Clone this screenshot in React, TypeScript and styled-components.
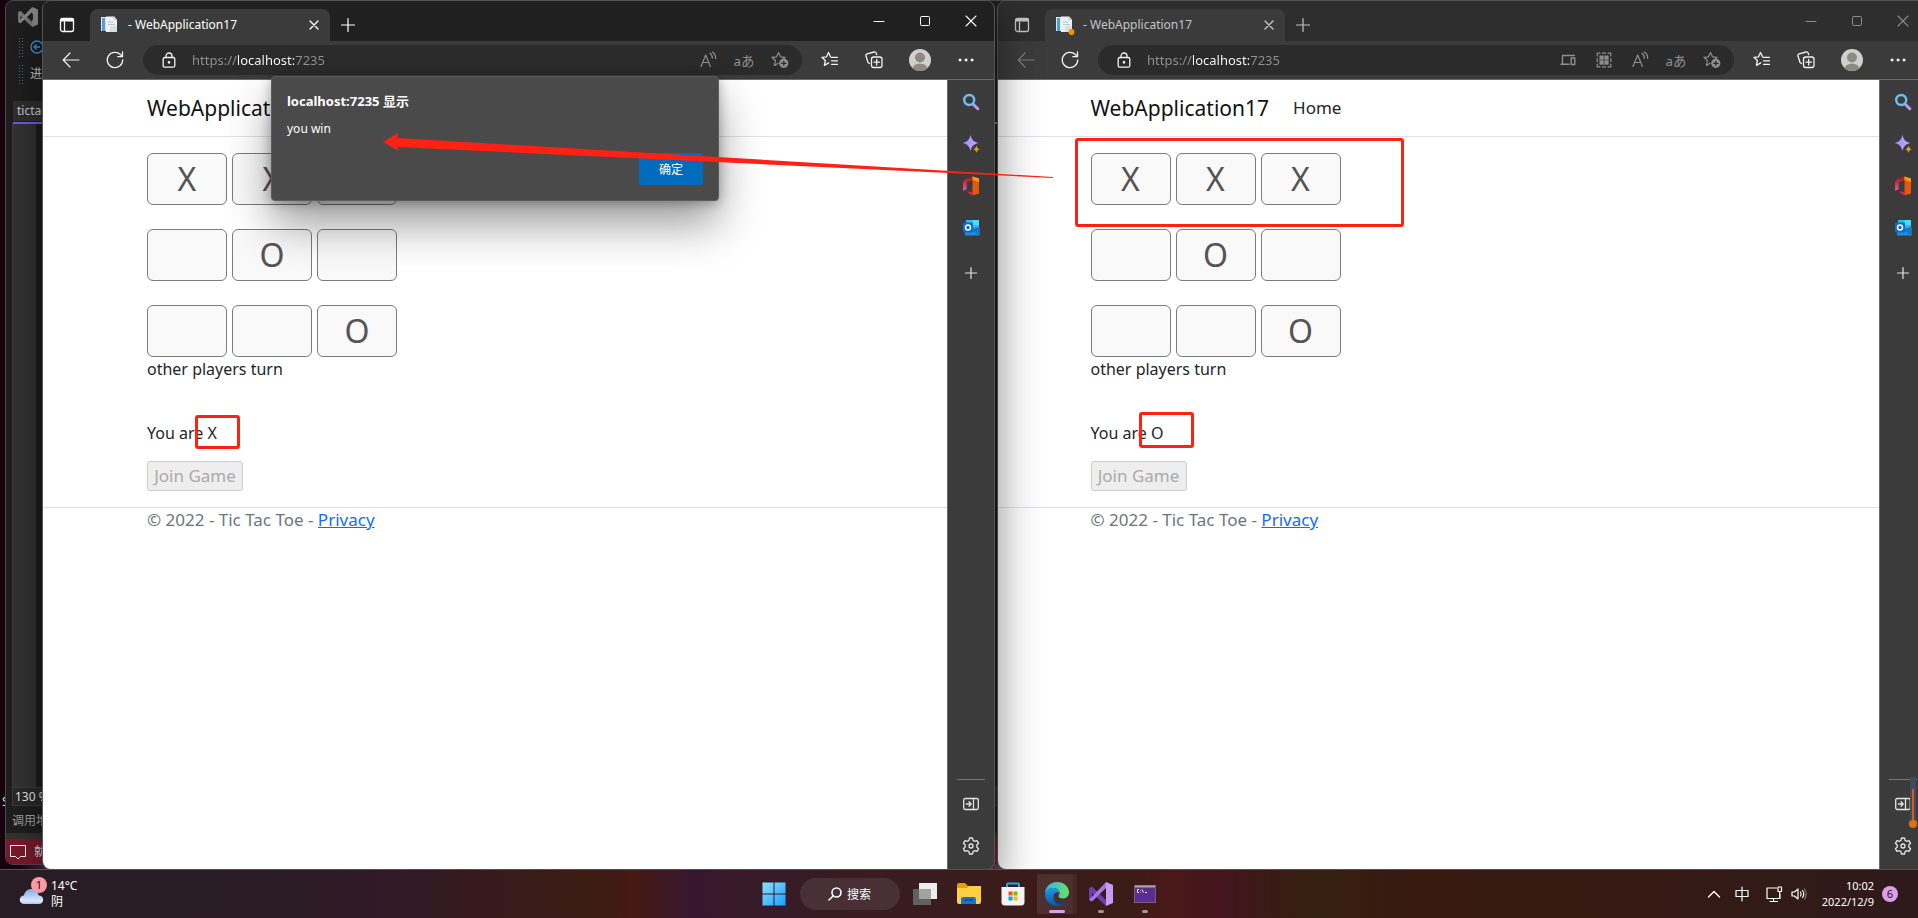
import React from 'react';
import styled, { createGlobalStyle } from 'styled-components';

const GlobalStyle = createGlobalStyle`
  *, *::before, *::after { box-sizing: border-box; }
  html, body, #root { height: 100%; }
  body {
    margin: 0;
    overflow: hidden;
    background: #180210;
    font-family: 'Noto Sans', 'Noto Sans CJK SC', sans-serif;
    font-size: 12px;
    line-height: 16px;
  }
  button, input { font-family: inherit; }
  svg { display: block; flex: none; }
`;

/* ---------- shell ---------- */

const Desktop = styled.div`
  height: 100%;
  display: flex;
  flex-direction: column;
`;

const Workspace = styled.main`
  position: relative;
  flex: 1;
  min-height: 0;
  overflow: hidden;
  padding-top: 1px;
  display: grid;
  grid-template-columns: 43px minmax(0, 951fr) 4px minmax(0, 920fr);
  background: linear-gradient(to right, #180210 0 20px, #6b3a52 60px);
`;

const IconButton = styled.button<{ $w?: number; $h?: number }>`
  width: ${(p) => p.$w ?? 44}px;
  height: ${(p) => p.$h ?? 30}px;
  flex: none;
  padding: 0;
  border: 0;
  background: none;
  color: inherit;
  display: flex;
  align-items: center;
  justify-content: center;
`;

/* ---------- editor behind the browsers ---------- */

const DesktopLabel = styled.span`
  position: absolute;
  left: 2px;
  top: 794px;
  color: #ddd;
`;

const Editor = styled.section`
  position: absolute;
  left: 5px;
  right: 0;
  top: 0;
  bottom: 4px;
  display: flex;
  flex-direction: column;
  border: 1px solid #4a4a4a;
  border-radius: 8px;
  overflow: hidden;
  background: #1f1f1f;
  color: #d0d0d0;
`;

const EditorTitle = styled.div`
  height: 32px;
  padding: 6px 12px;
`;

const EditorBar = styled.div`
  height: 27px;
  display: flex;
  align-items: center;
  gap: 6px;
  padding-left: 12px;
  white-space: nowrap;
`;

const Grip = styled.span`
  width: 6px;
  height: 20px;
  flex: none;
  background: radial-gradient(circle, #6a6a6a 1px, transparent 1px) 0 0 / 3px 3px;
`;

const EditorTabs = styled.div`
  margin: 14px 0 0 7px;
  height: 23px;
  border-bottom: 2px solid #7160e8;
`;

const EditorTab = styled.span`
  display: block;
  width: 90px;
  height: 20px;
  padding: 2px 4px;
  background: #303030;
`;

const EditorBody = styled.div`
  flex: 1;
  margin-left: 6px;
  border-left: 1px solid #3d3d3d;
  background: linear-gradient(to right, #333 0 23px, #1c1c1c 23px);
`;

const EditorZoom = styled.div`
  margin-left: 6px;
  height: 19px;
  padding: 1px 2px;
  border: 1px solid #3d3d3d;
  background: #2a2a2a;
  color: #eee;
`;

const EditorPanel = styled.div`
  height: 33px;
  padding: 7px 6px;
  color: #a8a8a8;
  border-bottom: 6px solid #333;
`;

const EditorStatus = styled.div`
  height: 25px;
  display: flex;
  align-items: center;
  gap: 7px;
  padding-left: 3px;
  background: #7d1a2d;
  color: #eee;
`;

/* ---------- browser window ---------- */

const Window = styled.section<{ $active: boolean }>`
  position: relative;
  grid-column: ${(p) => (p.$active ? 2 : 4)};
  grid-row: 1;
  z-index: ${(p) => (p.$active ? 2 : 1)};
  margin-right: ${(p) => (p.$active ? 0 : -8)}px;
  display: flex;
  flex-direction: column;
  border-radius: 8px;
  background: #3b3b3b;
  box-shadow: 0 0 0 1px #555${(p) => (p.$active ? ', 0 16px 44px 4px rgba(0, 0, 0, .45)' : '')};
`;

const TitleBar = styled.header<{ $active: boolean }>`
  height: 40px;
  display: flex;
  align-items: flex-end;
  border-radius: 8px 8px 0 0;
  background: ${(p) => (p.$active ? '#202020' : '#2e2e2e')};
  color: ${(p) => (p.$active ? '#fff' : '#c4c4c4')};
`;

const Tab = styled.div`
  width: 240px;
  height: 32px;
  display: flex;
  align-items: center;
  padding: 0 8px 0 10px;
  border-radius: 8px 8px 0 0;
  background: #3b3b3b;
`;

const TabTitle = styled.span`
  flex: 1;
  padding-left: 8px;
`;

const WindowButtons = styled.div<{ $active: boolean }>`
  margin-left: auto;
  align-self: flex-start;
  display: flex;
  color: ${(p) => (p.$active ? '#fff' : '#8c8c8c')};
`;

const ToolBar = styled.div`
  height: 39px;
  display: flex;
  align-items: center;
  padding: 0 6px;
  border-bottom: 1px solid #6a6a6a;
  color: #f2f2f2;
`;

const Dim = styled.span<{ $on: boolean }>`
  display: flex;
  color: ${(p) => (p.$on ? '#7d7d7d' : '#f2f2f2')};
`;

const AddressBar = styled.div`
  flex: 1;
  min-width: 0;
  height: 30px;
  margin: 0 6px;
  padding: 0 4px;
  display: flex;
  align-items: center;
  border-radius: 15px;
  background: #2b2b2b;
  color: #8f8f8f;
`;

const AddressInput = styled.input`
  flex: 1;
  min-width: 0;
  height: 20px;
  margin-left: 1px;
  padding: 0;
  border: 0;
  outline: 0;
  font-size: 13px;
  line-height: 20px;
  background: linear-gradient(to right, #919191 0 46px, #fff 46px 102px, #919191 102px);
  background-clip: text;
  -webkit-background-clip: text;
  color: transparent;
`;

const Avatar = styled.span`
  width: 22px;
  height: 22px;
  overflow: hidden;
  border-radius: 50%;
  background: #d2d0ce;
`;

const WindowBody = styled.div`
  flex: 1;
  min-height: 0;
  display: flex;
`;

const Sidebar = styled.aside`
  width: 47px;
  flex: none;
  display: flex;
  flex-direction: column;
  align-items: center;
  padding: 1px 0 2px;
  border-left: 1px solid #6a6a6a;
  color: #e4e4e4;
`;

const SidebarRule = styled.hr`
  width: 28px;
  margin: auto 0 3px;
  border: 0;
  border-top: 1px solid #777;
`;

/* ---------- web page ---------- */

const Page = styled.article<{ $active: boolean }>`
  position: relative;
  flex: 1;
  min-width: 0;
  background: #fff;
  color: #212529;
  font-size: 16px;
  line-height: 24px;
  border-bottom-left-radius: 8px;
`;

const Container = styled.div`
  max-width: 720px;
  margin: 0 auto;
  padding: 0 12px;
`;

const NavBar = styled.nav`
  height: 57px;
  margin-bottom: 16px;
  border-bottom: 1px solid #dee2e6;
`;

const NavInner = styled(Container)`
  height: 56px;
  display: flex;
  align-items: center;
  gap: 24px;
`;

const NavLink = styled.a<{ $brand?: boolean }>`
  color: ${(p) => (p.$brand ? '#111' : '#212529')};
  font-size: ${(p) => (p.$brand ? 21 : 17)}px;
  text-decoration: none;
`;

const Board = styled.div`
  display: flex;
  flex-direction: column;
  gap: 24px;
`;

const BoardRow = styled.div`
  position: relative;
  display: flex;
  gap: 5px;
`;

const Cell = styled.button`
  width: 80px;
  height: 52px;
  padding: 0;
  border: 1px solid #7c7c7c;
  border-radius: 6px;
  background: #f9f9f9;
  color: #545454;
  font-size: 32px;
  line-height: 48px;
`;

const Status = styled.p`
  margin: 0 0 40px;
`;

const Role = styled.p`
  position: relative;
  margin: 0 0 16px;
`;

const JoinButton = styled.button`
  display: block;
  width: 96px;
  height: 30px;
  margin-bottom: 16px;
  padding: 0;
  border: 1px solid #ccc;
  border-radius: 3px;
  background: #eee;
  color: #aaa;
  font-size: 17px;
  line-height: 24px;
  white-space: nowrap;
`;

const Footer = styled.footer`
  border-top: 1px solid #dee2e6;
  color: #6c757d;
  font-size: 17px;

  a { color: #0d6efd; }
`;

const Mark = styled.span<{ $x: number; $y: number; $w: number; $h: number }>`
  position: absolute;
  left: ${(p) => p.$x}px;
  top: ${(p) => p.$y}px;
  width: ${(p) => p.$w}px;
  height: ${(p) => p.$h}px;
  border: 3px solid #ff2113;
  border-radius: 3px;
`;

const Arrow = styled.svg`
  position: absolute;
  left: 383px;
  top: 132px;
  z-index: 4;
`;

const Dialog = styled.section`
  position: absolute;
  z-index: 3;
  top: -4px;
  left: 50%;
  width: 448px;
  height: 125px;
  margin-left: -224px;
  padding: 16px 15px 15px;
  display: flex;
  flex-direction: column;
  border: 1px solid #5c5c5c;
  border-radius: 4px;
  background: #4a4a4a;
  color: #fff;
  font-size: 12px;
  line-height: 16px;
  box-shadow: 0 24px 44px rgba(0, 0, 0, .38), 0 2px 12px rgba(0, 0, 0, .3);
`;

const DialogTitle = styled.h2`
  margin: 0 0 12px;
  font-size: 13px;
  line-height: 16px;
`;

const DialogText = styled.p`
  margin: 0;
`;

const DialogButton = styled.button`
  width: 64px;
  height: 32px;
  margin-top: auto;
  align-self: flex-end;
  flex: none;
  padding: 0;
  border: 0;
  border-radius: 2px;
  background: #006cbe;
  color: #fff;
  font-size: 12px;
`;

/* ---------- taskbar ---------- */

const TaskBar = styled.footer`
  height: 49px;
  flex: none;
  display: grid;
  grid-template-columns: 1fr auto 1fr;
  align-items: stretch;
  border-top: 1px solid #5b4c50;
  color: #fff;
  background: linear-gradient(
    to right,
    #281d25 0%, #291c25 14%, #321a28 20%, #361a1d 25%, #3c1c12 31%, #451a13 33%,
    #38162f 36%, #361a28 39%, #381c20 46%, #3c1b16 59%, #4a1818 61%, #43151c 64%,
    #361d12 67%, #36200f 69%, #371910 74%, #351a13 86%, #2e1a1b 100%
  );
`;

const Weather = styled.button`
  justify-self: start;
  display: flex;
  align-items: center;
  gap: 4px;
  padding: 0 16px 0 19px;
  border: 0;
  background: none;
  color: #fff;
  font-size: 12px;
  line-height: 16px;
  text-align: left;
`;

const WeatherIcon = styled.span`
  position: relative;
  width: 28px;
  height: 34px;
  padding-top: 10px;
`;

const Badge = styled.span<{ $color: string; $corner?: boolean }>`
  position: ${(p) => (p.$corner ? 'absolute' : 'static')};
  top: 0;
  right: 0;
  width: 16px;
  height: 16px;
  border-radius: 50%;
  background: ${(p) => p.$color};
  color: #111;
  font-size: 11px;
  line-height: 16px;
  text-align: center;
`;

const TaskApps = styled.div`
  display: flex;
  align-items: center;
`;

const TaskButton = styled.button<{ $open?: boolean }>`
  width: 44px;
  height: 48px;
  padding: 0;
  border: 0;
  background: none;
  display: flex;
  flex-direction: column;
  align-items: center;
  padding-top: 12px;
  gap: 4px;
  ${(p) =>
    p.$open &&
    `background:
      linear-gradient(rgba(255,255,255,.09), rgba(255,255,255,.09)) 2px 4px / 36px 40px no-repeat,
      linear-gradient(rgba(255,255,255,.05), rgba(255,255,255,.05)) 38px 4px / 4px 40px no-repeat;`}
`;

const RunMark = styled.span<{ $active?: boolean }>`
  width: ${(p) => (p.$active ? 16 : 6)}px;
  height: 3px;
  border-radius: 2px;
  background: ${(p) => (p.$active ? '#dd9de8' : '#a09898')};
`;

const SearchButton = styled.button`
  width: 100px;
  height: 32px;
  margin: 0 3px 0 4px;
  padding: 0;
  display: flex;
  align-items: center;
  justify-content: center;
  gap: 5px;
  border: 0;
  border-radius: 16px;
  background: rgba(255, 255, 255, .09);
  color: #fff;
  font-size: 12px;
`;

const Tray = styled.div`
  justify-self: end;
  display: flex;
  align-items: center;
  padding-right: 20px;
`;

const Clock = styled.div`
  margin: 0 8px 0 15px;
  font-size: 11px;
  text-align: right;
`;

const Thermometer = styled.svg`
  position: absolute;
  right: 0;
  top: 775px;
  z-index: 5;
`;

/* ---------- icons ---------- */

type GlyphProps = { size?: number; w?: number; children: React.ReactNode };

const Glyph = ({ size = 16, w = 1, children }: GlyphProps) => (
  <svg width={size} height={size} viewBox={`0 0 ${size} ${size}`} fill="none" stroke="currentColor"
    strokeWidth={w} strokeLinecap="round" strokeLinejoin="round" aria-hidden="true">
    {children}
  </svg>
);

const TabsIcon = () => (
  <Glyph w={1.3}>
    <rect x="1.5" y="1.5" width="13" height="13" rx="2" />
    <path d="M2 3.5h12M2 2.6h12" strokeWidth="2" />
    <path d="M5.5 5v9" />
  </Glyph>
);
const CloseIcon = ({ big }: { big?: boolean }) => (
  <Glyph size={12} w={big ? 1.1 : 1.4}>{big ? <path d="M1 1l10 10M11 1L1 11" /> : <path d="M2 2l8 8M10 2l-8 8" />}</Glyph>
);
const PlusIcon = ({ size = 16 }: { size?: number }) => (
  <Glyph size={size} w={1.2}><path d={`M${size / 2} 1.500v${size - 3}M1.500 ${size / 2}h${size - 3}`} /></Glyph>
);
const BackIcon = () => <Glyph size={18} w={1.2}><path d="M17 9H1.500M8 2L1.200 9 8 16" /></Glyph>;
const ReloadIcon = () => (
  <Glyph size={18} w={1.3}><path d="M16.700 9a7.700 7.700 0 1 1-2.300-5.500l2 2M16.500 1v4.700h-4.700" /></Glyph>
);
const LockIcon = () => (
  <Glyph w={1.3}>
    <rect x="2.200" y="5.500" width="11.600" height="9.700" rx="1.500" />
    <path d="M5 5.500V4a3 3 0 0 1 6 0v1.500" />
    <circle cx="8" cy="10.300" r=".7" fill="currentColor" />
  </Glyph>
);
const STAR = 'M7.500 1.500l2 4.300 4.600.5-3.400 3.200M7.500 1.500l-2 4.300-4.600.5 3.500 3.200-1 4.900 3.700-2.200';
const AddFavIcon = () => (
  <Glyph size={18} w={1.2}>
    <path d={STAR} />
    <circle cx="12.800" cy="12.300" r="4" fill="currentColor" />
    <path d="M12.800 10.100v4.400M10.600 12.300h4.400" stroke="#2b2b2b" />
  </Glyph>
);
const FavoritesIcon = () => (
  <Glyph size={18} w={1.3}><path d="M9.500 5.800L7.500 1.500l-2 4.300-4.600.5 3.500 3.200-1 4.900 4.300-2.500M10.500 6.300h6M10.500 9.800h6M10.500 13.300h6" /></Glyph>
);
const CollectionsIcon = () => (
  <Glyph size={18} w={1.3}>
    <rect x="6.500" y="6" width="10.500" height="10.500" rx="2.200" />
    <path d="M11.700 8.500v5.500M9 11.200h5.500M4.500 12.500L3 11.500 1 5c-.3-1 .2-1.800 1.100-2.100L9 1c1-.3 1.900.2 2.200 1.100l.5 1.600" />
  </Glyph>
);
const ReadIcon = () => (
  <Glyph size={18} w={1.2}><path d="M2 15.500L6.700 4l4.700 11.500M3.700 11.500h6M11 2.200c1.600 1 2.400 2.800 2.300 5M13.400 1c2.300 1.400 3.300 3.600 3.200 6.500" /></Glyph>
);
const DevicesIcon = () => (
  <Glyph w={1.4}><path d="M2.500 11V3.500h12M1 12.300h8M14.500 6h-3.300v6.500h3.600V6z" /></Glyph>
);
const QrIcon = () => (
  <Glyph w={1.2}>
    <path d="M1.200 4V1.200H4M6.500 1.200h3M12 1.200h2.800V4M1.200 6.500v3M14.800 6.500v3M1.200 12v2.800H4M6.500 14.800h3M12 14.800h2.800V12" />
    <path d="M3.700 3.700h3.800v3.800H3.700zM8.600 3.700h3.800v3.800H8.600zM3.700 8.600h3.800v3.800H3.700zM8.600 8.600h3.800v3.800H8.600z" fill="currentColor" strokeWidth=".4" />
  </Glyph>
);
const DotsIcon = () => (
  <Glyph w={0.5}>{[2, 8, 14].map((x) => <circle key={x} cx={x} cy="8" r="1.200" fill="currentColor" />)}</Glyph>
);
const Favicon = ({ alert }: { alert: boolean }) => (
  <svg width="20" height="20" viewBox="0 0 20 20" aria-hidden="true">
    <path d="M1 2h10v14H1z" fill="#dfe8ee" />
    <path d="M2 3h3v13H2z" fill="#4f9fd4" />
    <path d="M6 1.500h8l3 3V17H6z" fill="#eef1f3" />
    <path d="M14 1.500v3h3M8 7h5M8 9.500h7" stroke="#b9c4cb" fill="none" />
    <path d="M10 11h7v6h-7z" fill="#d8dfe3" />
    {alert && <circle cx="16.500" cy="17" r="3" fill="#ff8c00" />}
  </svg>
);
const SearchColor = () => (
  <svg width="18" height="18" viewBox="0 0 18 18" fill="none" strokeWidth="2.400" aria-hidden="true">
    <path d="M11.500 11.500l4.300 4.300" stroke="#c295f2" strokeWidth="3" strokeLinecap="round" />
    <circle cx="7.200" cy="7" r="5" stroke="#6fc0ee" />
  </svg>
);
const Sparkle = () => (
  <svg width="18" height="18" viewBox="0 0 18 18" aria-hidden="true">
    <defs><linearGradient id="sp"><stop stopColor="#7f9cff" /><stop offset="1" stopColor="#e595ff" /></linearGradient></defs>
    <path d="M8.500 0C10 5 11 6.500 16.500 8c-5.500 1.500-6.500 3-8 8-1.500-5-2.500-6.500-8-8 5.500-1.500 6.500-3 8-8z" fill="url(#sp)" />
    <path d="M14.500 10.500c.7 2.300 1.200 3 3.300 3.700-2.100.7-2.600 1.300-3.300 3.600-.7-2.300-1.200-2.900-3.300-3.600 2.100-.7 2.600-1.400 3.300-3.700z" fill="#d9a514" />
  </svg>
);
const OfficeIcon = () => (
  <svg width="18" height="20" viewBox="0 0 18 20" aria-hidden="true">
    <defs><linearGradient id="of" x1="0" y1="0" x2="0" y2="1"><stop stopColor="#b11116" /><stop offset="1" stopColor="#e75a9e" /></linearGradient></defs>
    <path d="M10.500.500L3 3.300 1 5.800v9l3.700-1.600V5.900l6-1.700z" fill="url(#of)" />
    <path d="M10.500.500L17 2.500v15l-6.500 2z" fill="#e8560a" />
    <path d="M10.500.500L17 2.500V6l-6.500-2z" fill="#ff9a0a" />
    <path d="M4 15.200l6.500.8v3.500z" fill="#e3253f" />
  </svg>
);
const OutlookIcon = () => (
  <svg width="18" height="18" viewBox="0 0 18 18" aria-hidden="true">
    <path d="M4 1h13v8H4z" fill="#35b8f1" />
    <path d="M10.500 1H17v5h-6.500z" fill="#50d9ff" />
    <path d="M3 9l14.500-1v8.500H3z" fill="#1d8fdc" />
    <path d="M17.500 8v8.500L9 11z" fill="#1577c8" />
    <rect x="1" y="3.500" width="10" height="10" rx="1" fill="#0a6cc4" />
    <circle cx="6" cy="8.500" r="2.500" fill="none" stroke="#fff" strokeWidth="1.500" />
  </svg>
);
const PanelIcon = () => (
  <Glyph w={1.3}><rect x=".700" y="2.500" width="14.600" height="11" rx="1.500" /><path d="M10.500 2.500v11M3.300 8h4.700M6 5.800L8.200 8 6 10.200" /></Glyph>
);
const GearIcon = () => (
  <Glyph size={18} w={1.3}>
    <circle cx="9" cy="9" r="2" />
    <path d="M7.500 1h3l.6 2.400 1.500.9 2.400-.7 1.600 2.700-1.800 1.700v2l1.800 1.700-1.600 2.700-2.400-.7-1.500.9-.6 2.400h-3l-.6-2.400-1.500-.9-2.400.7-1.600-2.700L3.200 10V8L1.400 6.300 3 3.600l2.400.7 1.500-.9z" />
  </Glyph>
);

const StartIcon = () => (
  <svg width="24" height="24" viewBox="0 0 24 24" aria-hidden="true">
    <defs><linearGradient id="st" x1="0" y1="0" x2="1" y2="1"><stop stopColor="#8be0ff" /><stop offset="1" stopColor="#1a9fff" /></linearGradient></defs>
    <path d="M.500.500h11v11H.500zM12.500.500h11v11h-11zM.500 12.500h11v11H.500zM12.500 12.500h11v11h-11z" fill="url(#st)" />
  </svg>
);
const TaskViewIcon = () => (
  <svg width="24" height="24" viewBox="0 0 24 24" aria-hidden="true">
    <rect x="6" y="1" width="18" height="16" fill="#ededed" />
    <rect x="0" y="7" width="18" height="16" fill="#616161" />
    <path d="M6 7h12v10H6z" fill="#a3a3a3" />
  </svg>
);
const FolderIcon = () => (
  <svg width="24" height="24" viewBox="0 0 24 24" aria-hidden="true">
    <path d="M0 3q0-2 2-2h6l3 3H24v6H0z" fill="#e5a000" />
    <path d="M0 6h10l2-2h12v16q0 2-2 2H2q-2 0-2-2z" fill="#ffcf42" />
    <path d="M4 22v-5q0-2 2-2h11q2 0 2 2v5z" fill="#1376c8" />
    <path d="M7 18h9" stroke="#0a4f94" strokeWidth="1.500" />
  </svg>
);
const StoreIcon = () => (
  <svg width="24" height="24" viewBox="0 0 24 24" aria-hidden="true">
    <path d="M6 6V2.500q0-1 1-1h10q1 0 1 1V6" fill="none" stroke="#24a8ea" strokeWidth="2" />
    <path d="M.500 5h23v15q0 3.500-3.500 3.500H4Q.500 23.500.500 20z" fill="#f3f3f3" />
    <path d="M7.500 9.500h4v4h-4z" fill="#f25022" /><path d="M12.500 9.500h4v4h-4z" fill="#7fba00" />
    <path d="M7.500 14.500h4v4h-4z" fill="#00a4ef" /><path d="M12.500 14.500h4v4h-4z" fill="#ffb900" />
  </svg>
);
const EdgeIcon = () => (
  <svg width="24" height="24" viewBox="0 0 24 24" aria-hidden="true">
    <defs>
      <linearGradient id="e1"><stop stopColor="#2fb4ee" /><stop offset="1" stopColor="#6be061" /></linearGradient>
      <linearGradient id="e2" x1="0" y1="0" x2="0" y2="1"><stop stopColor="#1c9de0" /><stop offset="1" stopColor="#0b52a4" /></linearGradient>
    </defs>
    <path d="M0 12C0 5 5 0 12 0s12 5 12 10.500c0 3.500-2.500 6-6 6-3 0-4.500-1.200-4.500-2.200 0-.8 1-1.300 1-3.300C14.500 8 11.500 6 8 6S1 8.500 0 12z" fill="url(#e1)" />
    <path d="M0 12C1 8 4.500 6 8 6c3.500 0 6.500 2 6.500 5-3-2-6 0-6 4 0 5 6 7.500 12 5.500C18.500 23 15.500 24 12 24 5 24 0 19 0 12z" fill="url(#e2)" />
    <path d="M8.500 14c-.5 6 6 8.500 13 4.500-.8 1.700-2 3-3.500 4-6 1-10.500-3-9.500-8.500z" fill="#0d3f86" />
  </svg>
);
const VsIcon = ({ mono }: { mono?: boolean }) => (
  <svg width={mono ? 20 : 24} height={mono ? 20 : 24} viewBox="0 0 24 24" aria-hidden="true">
    <path d="M0 6l3-1.500L18 19l-1 5L0 8zM0 18V6l3 2v8l-3 2z" fill={mono ? '#777' : '#6a3fae'} />
    <path d="M0 18l3 1.500L18 5l-1-5z" fill={mono ? '#8a8a8a' : '#a678e6'} />
    <path d="M17 0l7 3v18l-7 3z" fill={mono ? '#8a8a8a' : '#c79cf7'} />
    {mono && <path d="M18 8v8l-5-4z" fill="#1f1f1f" />}
  </svg>
);
const TerminalIcon = () => (
  <svg width="24" height="24" viewBox="0 0 24 24" aria-hidden="true">
    <rect x="1.500" y="3.500" width="21" height="17" fill="#5b2d91" stroke="#6e6473" />
    <path d="M2 4.500h20" stroke="#a9a3ad" strokeWidth="2" />
    <path d="M6 7.500H4.500v3H6M7.500 8v.5M7.500 10v.5M9 7.500l1.500 3M12 10.500h2" stroke="#e8dff0" fill="none" />
  </svg>
);

/* ---------- components ---------- */

const BOARD_ROWS = [['X', 'X', 'X'], ['', 'O', ''], ['', '', 'O']];

function TicTacToePage({ player }: { player: 'X' | 'O' }) {
  const won = player === 'X';
  return (
    <Page $active={won}>
      <NavBar>
        <NavInner>
          <NavLink $brand href="#">WebApplication17</NavLink>
          {!won && <NavLink href="#">Home</NavLink>}
        </NavInner>
      </NavBar>
      <Container>
        <Board>
          {BOARD_ROWS.map((row, r) => (
            <BoardRow key={r}>
              {row.map((value, c) => (
                <Cell key={c} disabled aria-label={`Row ${r + 1}, column ${c + 1}`}>{value}</Cell>
              ))}
              {!won && r === 0 && <Mark $x={-16} $y={-15} $w={329} $h={89} />}
            </BoardRow>
          ))}
        </Board>
        <Status>other players turn</Status>
        <Role>
          You are {player}
          {won ? <Mark $x={48} $y={-6} $w={45} $h={34} /> : <Mark $x={48} $y={-9} $w={55} $h={36} />}
        </Role>
        <JoinButton disabled>Join Game</JoinButton>
      </Container>
      <Footer>
        <Container>
          © 2022 - Tic Tac Toe - <a href="#">Privacy</a>
        </Container>
      </Footer>
      {won && (
        <Dialog role="dialog" aria-labelledby="alert-title">
          <DialogTitle id="alert-title">localhost:7235 显示</DialogTitle>
          <DialogText>you win</DialogText>
          <DialogButton>确定</DialogButton>
        </Dialog>
      )}
    </Page>
  );
}

function BrowserWindow({ player }: { player: 'X' | 'O' }) {
  const active = player === 'X';
  return (
    <Window $active={active}>
      <TitleBar $active={active}>
        <IconButton $w={47} $h={32} aria-label="Tab actions"><TabsIcon /></IconButton>
        <Tab>
          <Favicon alert={!active} />
          <TabTitle>- WebApplication17</TabTitle>
          <IconButton $w={16} $h={16} aria-label="Close tab"><CloseIcon /></IconButton>
        </Tab>
        <IconButton $w={36} $h={32} aria-label="New tab"><PlusIcon /></IconButton>
        <WindowButtons $active={active}>
          <IconButton $w={46} $h={40} aria-label="Minimize"><Glyph size={12} w={1}><path d="M1 6.500h10" /></Glyph></IconButton>
          <IconButton $w={46} $h={40} aria-label="Maximize"><Glyph size={12} w={1}><rect x="1.500" y="1.500" width="9" height="9" rx="1" /></Glyph></IconButton>
          <IconButton $w={46} $h={40} aria-label="Close"><CloseIcon big /></IconButton>
        </WindowButtons>
      </TitleBar>
      <ToolBar>
        <Dim $on={!active}><IconButton aria-label="Back"><BackIcon /></IconButton></Dim>
        <IconButton aria-label="Refresh"><ReloadIcon /></IconButton>
        <AddressBar>
          <Dim $on={false}><IconButton aria-label="Site information"><LockIcon /></IconButton></Dim>
          <AddressInput aria-label="Address" defaultValue="https://localhost:7235" />
          {!active && (
            <>
              <IconButton $w={36} aria-label="Send to devices"><DevicesIcon /></IconButton>
              <IconButton $w={36} aria-label="QR code"><QrIcon /></IconButton>
            </>
          )}
          <IconButton $w={36} aria-label="Read aloud"><ReadIcon /></IconButton>
          <IconButton $w={36} aria-label="Translate">aあ</IconButton>
          <IconButton $w={36} aria-label="Add to favorites"><AddFavIcon /></IconButton>
        </AddressBar>
        <IconButton aria-label="Favorites"><FavoritesIcon /></IconButton>
        <IconButton aria-label="Collections"><CollectionsIcon /></IconButton>
        <IconButton $w={48} aria-label="Profile">
          <Avatar>
            <svg width="22" height="22" viewBox="0 0 22 22" fill="#8f8984" aria-hidden="true">
              <circle cx="11" cy="8.500" r="5" /><ellipse cx="11" cy="20" rx="7.500" ry="5.500" />
            </svg>
          </Avatar>
        </IconButton>
        <IconButton aria-label="Settings and more"><DotsIcon /></IconButton>
      </ToolBar>
      <WindowBody>
        <TicTacToePage player={player} />
        <Sidebar>
          <IconButton $h={42} aria-label="Search"><SearchColor /></IconButton>
          <IconButton $h={42} aria-label="Discover"><Sparkle /></IconButton>
          <IconButton $h={42} aria-label="Office"><OfficeIcon /></IconButton>
          <IconButton $h={42} aria-label="Outlook"><OutlookIcon /></IconButton>
          <IconButton $h={48} aria-label="Add"><PlusIcon size={14} /></IconButton>
          <SidebarRule />
          <IconButton $h={42} aria-label="Hide sidebar"><PanelIcon /></IconButton>
          <IconButton $h={42} aria-label="Sidebar settings"><GearIcon /></IconButton>
        </Sidebar>
      </WindowBody>
    </Window>
  );
}

function CodeEditor() {
  return (
    <Editor>
      <EditorTitle><VsIcon mono /></EditorTitle>
      <EditorBar>
        <Grip />
        <svg width="14" height="14" viewBox="0 0 14 14" fill="none" stroke="#3d9be9" strokeWidth="1.300" aria-hidden="true">
          <circle cx="7" cy="7" r="6" /><path d="M10 7H4M6.500 4.500L4 7l2.500 2.500" />
        </svg>
      </EditorBar>
      <EditorBar><Grip />进程</EditorBar>
      <EditorTabs><EditorTab>tictactoe</EditorTab></EditorTabs>
      <EditorBody />
      <EditorZoom>130 %</EditorZoom>
      <EditorPanel>调用堆栈</EditorPanel>
      <EditorStatus>
        <svg width="18" height="18" viewBox="0 0 18 18" fill="none" stroke="#fff" aria-hidden="true">
          <path d="M1.500 2.500h15v11h-5L9 16l-2.500-2.500h-5z" />
        </svg>
        就绪
      </EditorStatus>
    </Editor>
  );
}

export default function App() {
  return (
    <Desktop>
      <GlobalStyle />
      <Workspace>
        <DesktopLabel>S</DesktopLabel>
        <CodeEditor />
        <BrowserWindow player="X" />
        <BrowserWindow player="O" />
        <Arrow width="670" height="48" viewBox="0 0 670 48" fill="#ff2113" aria-hidden="true">
          <path d="M0 10L15 1l-1 5 656 39v1L14 15l2 4z" />
        </Arrow>
        <Thermometer width="10" height="56" viewBox="0 0 10 56" aria-hidden="true">
          <path d="M2 2h6v42a5 5 0 1 1-6 0z" fill="#3c4c58" />
          <path d="M5 14v35" stroke="#e0561c" strokeWidth="2" />
          <circle cx="5" cy="49" r="4" fill="#e0700c" />
        </Thermometer>
      </Workspace>
      <TaskBar>
        <Weather>
          <WeatherIcon>
            <svg width="25" height="18" viewBox="0 0 25 18" aria-hidden="true">
              <defs><linearGradient id="cl" x1="0" y1="0" x2="0" y2="1"><stop stopColor="#7ea9ee" /><stop offset=".8" stopColor="#dfe9fa" /><stop offset="1" stopColor="#a9c2ec" /></linearGradient></defs>
              <path d="M5 17a4.300 4.300 0 0 1 0-8.600C6 4 9 2 12.500 2s6.500 2.500 7.200 6.400A4.300 4.300 0 0 1 20 17z" fill="url(#cl)" />
            </svg>
            <Badge $corner $color="#ff99a4">1</Badge>
          </WeatherIcon>
          <span>14°C<br />阴</span>
        </Weather>
        <TaskApps>
          <TaskButton aria-label="Start"><StartIcon /></TaskButton>
          <SearchButton>
            <Glyph size={14} w={1.6}><circle cx="8.500" cy="5.500" r="4.500" /><path d="M5.300 8.800L1 13" /></Glyph>
            搜索
          </SearchButton>
          <TaskButton aria-label="Task view"><TaskViewIcon /></TaskButton>
          <TaskButton aria-label="File Explorer"><FolderIcon /></TaskButton>
          <TaskButton aria-label="Store"><StoreIcon /></TaskButton>
          <TaskButton $open aria-label="Edge"><EdgeIcon /><RunMark $active /></TaskButton>
          <TaskButton aria-label="Visual Studio"><VsIcon /><RunMark /></TaskButton>
          <TaskButton aria-label="Terminal"><TerminalIcon /><RunMark /></TaskButton>
        </TaskApps>
        <Tray>
          <IconButton $w={26} aria-label="Hidden icons"><Glyph size={14} w={1.4}><path d="M1.500 10L7 4.500l5.500 5.500" /></Glyph></IconButton>
          <IconButton $w={30} aria-label="Input method">
            <Glyph size={16} w={1.2}><path d="M2 4.500h12v6H2zM8 1v14" /></Glyph>
          </IconButton>
          <IconButton $w={34} aria-label="Network">
            <Glyph size={18} w={1.2}><path d="M11.500 3H2v10.500h13V9M8.500 13.500v3M5 16.500h7.500M13 2h3.500v4.500H13zM14.700 6.500v7" /></Glyph>
          </IconButton>
          <IconButton $w={16} aria-label="Volume">
            <Glyph size={16} w={1.2}><path d="M1 6h2.500L7 3v10L3.500 10H1zM9.500 6q1.500 2 0 4M11.500 4.500q2.600 3.500 0 7" /><path d="M13.500 3q3.600 5 0 10" opacity=".4" /></Glyph>
          </IconButton>
          <Clock>10:02<br />2022/12/9</Clock>
          <Badge $color="#dd9de8">6</Badge>
        </Tray>
      </TaskBar>
    </Desktop>
  );
}
